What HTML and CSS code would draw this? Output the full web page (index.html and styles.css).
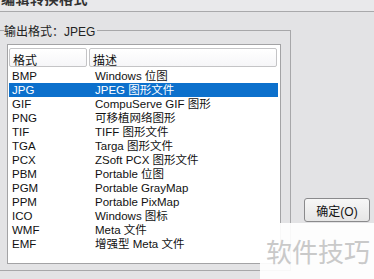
FILE: index.html
```html
<!DOCTYPE html>
<html lang="zh-CN">
<head>
    <meta charset="UTF-8">
    <title>编辑转换格式</title>
    <link rel="stylesheet" href="styles.css">
</head>
<body>
    <div class="titlebar"><span class="title">编辑转换格式</span></div>

    <div class="dialog">
        <fieldset class="group">
            <legend>输出格式：JPEG</legend>
            <div class="listbox">
                <div class="header">
                    <div class="hcell col-fmt">格式</div>
                    <div class="hcell col-desc">描述</div>
                </div>
                <div class="rows">
                    <div class="row"><span class="col-fmt">BMP</span><span class="col-desc">Windows 位图</span></div>
                    <div class="row selected"><span class="col-fmt">JPG</span><span class="col-desc">JPEG 图形文件</span></div>
                    <div class="row"><span class="col-fmt">GIF</span><span class="col-desc">CompuServe GIF 图形</span></div>
                    <div class="row"><span class="col-fmt">PNG</span><span class="col-desc">可移植网络图形</span></div>
                    <div class="row"><span class="col-fmt">TIF</span><span class="col-desc">TIFF 图形文件</span></div>
                    <div class="row"><span class="col-fmt">TGA</span><span class="col-desc">Targa 图形文件</span></div>
                    <div class="row"><span class="col-fmt">PCX</span><span class="col-desc">ZSoft PCX 图形文件</span></div>
                    <div class="row"><span class="col-fmt">PBM</span><span class="col-desc">Portable 位图</span></div>
                    <div class="row"><span class="col-fmt">PGM</span><span class="col-desc">Portable GrayMap</span></div>
                    <div class="row"><span class="col-fmt">PPM</span><span class="col-desc">Portable PixMap</span></div>
                    <div class="row"><span class="col-fmt">ICO</span><span class="col-desc">Windows 图标</span></div>
                    <div class="row"><span class="col-fmt">WMF</span><span class="col-desc">Meta 文件</span></div>
                    <div class="row"><span class="col-fmt">EMF</span><span class="col-desc">增强型 Meta 文件</span></div>
                </div>
            </div>
        </fieldset>

        <div class="side">
            <button class="btn">确定(<u>O</u>)</button>
        </div>
    </div>

    <div class="watermark">软件技巧</div>
</body>
</html>
```

FILE: styles.css
```css
html, body {
    margin: 0;
    padding: 0;
}
body {
    width: 374px;
    height: 279px;
    overflow: hidden;
    position: relative;
    background-color: #e3e3e5;
    font-family: "Liberation Sans", "Noto Sans CJK SC", sans-serif;
    font-size: 11.5px;
    color: #111;
}
.titlebar {
    height: 11px;
    background-color: #e9e9eb;
    border-bottom: 1px solid #a9a9ab;
    overflow: hidden;
}
.title {
    display: block;
    margin-top: -12px;
    margin-left: 1px;
    font-size: 14px;
    font-weight: bold;
    color: #333;
    letter-spacing: 0.5px;
}
.dialog {
    display: flex;
    align-items: flex-start;
}
.group {
    margin: 10px 0 0 -4px;
    padding: 7px 9px 13px 10px;
    width: 295px;
    height: 249px;
    border: 1px solid #a7a7a9;
    box-sizing: border-box;
    flex-shrink: 0;
}
.group legend {
    padding: 0 2px 0 0;
    margin-left: -3px;
    font-size: 12px;
    color: #222;
}
.listbox {
    height: 220px;
    box-sizing: border-box;
    border: 1px solid #a3a3a5;
    background-color: #fff;
    padding: 3px 1px 0 1px;
    margin-top: -2px;
}
.header {
    display: flex;
    height: 19px;
    gap: 2px;
}
.hcell {
    box-sizing: border-box;
    border: 1px solid #c4c4c6;
    border-radius: 2px;
    background: linear-gradient(#ffffff, #f6f6f8);
    padding: 2px 0 0 3px;
    font-size: 12px;
}
.hcell.col-fmt {
    width: 78px;
}
.hcell.col-desc {
    flex: 1;
    margin-right: 2px;
}
.rows {
    padding-top: 2px;
}
.row {
    display: flex;
    height: 14px;
    line-height: 14px;
    white-space: nowrap;
}
.row .col-fmt {
    width: 83px;
    padding-left: 3px;
}
.row.selected {
    background-color: #0c70cc;
    color: #fff;
    margin-right: 1px;
}
.side {
    margin-left: 13px;
    padding-top: 186px;
}
.btn {
    width: 66px;
    height: 24px;
    border: 1px solid #8a8a8c;
    border-radius: 3px;
    background: linear-gradient(#f7f7f7, #e6e6e6);
    font-family: "Liberation Sans", "Noto Sans CJK SC", sans-serif;
    font-size: 12px;
    color: #111;
    padding: 0;
}
.btn u {
    text-decoration: none;
}
.watermark {
    position: absolute;
    left: 260px;
    top: 223px;
    width: 114px;
    height: 56px;
    background-color: rgba(255, 255, 255, 0.92);
    color: #c9c9c9;
    font-family: "Noto Sans CJK SC", sans-serif;
    font-size: 26px;
    line-height: 56px;
    padding-left: 6px;
    box-sizing: border-box;
}
```
